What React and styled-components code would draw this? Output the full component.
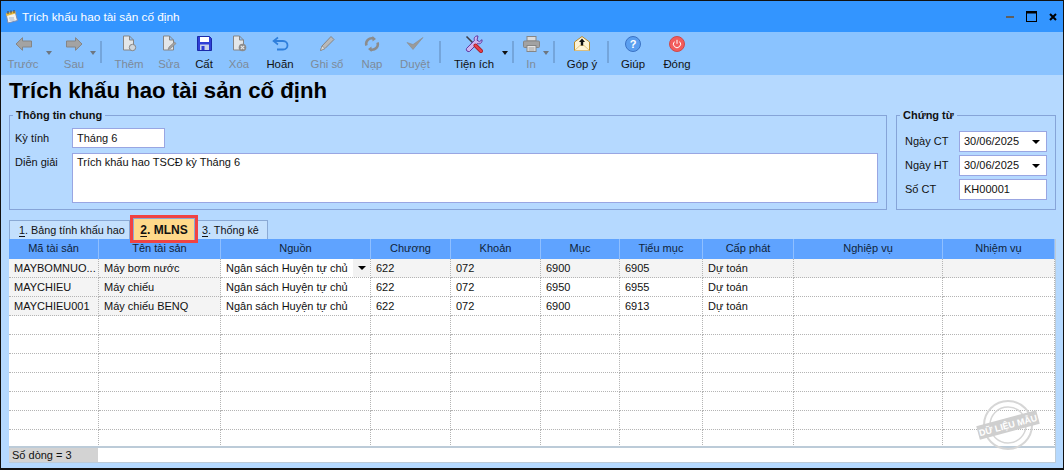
import React from "react";
import styled, { createGlobalStyle } from "styled-components";

const GlobalStyle = createGlobalStyle`
  html, body {
    margin: 0;
    padding: 0;
    background: #fff;
  }
  * {
    box-sizing: border-box;
  }
`;

const Window = styled.div`
  position: relative;
  display: flex;
  flex-direction: column;
  width: 1064px;
  height: 470px;
  border: 1px solid #111;
  border-bottom-width: 2px;
  background: #b5d9ff;
  font-family: "Liberation Sans", Arial, sans-serif;
  font-size: 11px;
  color: #111;
  overflow: hidden;
`;

const TitleBar = styled.div`
  display: flex;
  flex: none;
  align-items: center;
  height: 31px;
  padding: 0 6px 0 3px;
  background: #3395ff;
  color: #fff;
  font-size: 11.8px;
`;

const TitleText = styled.span`
  flex: 1;
  margin-left: 3px;
`;

const WinButtons = styled.div`
  display: flex;
  align-items: center;
  gap: 12px;
`;

const Toolbar = styled.div`
  display: flex;
  flex: none;
  align-items: stretch;
  height: 43px;
  padding-left: 2px;
  background: #8ac3ff;
  font-size: 11.4px;
`;

const ToolButton = styled.div`
  display: flex;
  flex-direction: column;
  align-items: center;
  width: ${(p) => p.$w}px;
  margin-left: ${(p) => p.$ml || 0}px;
  padding-top: 2px;
  color: ${(p) => (p.$off ? "#7d8a99" : "#111")};
  white-space: nowrap;
`;

const ToolIcon = styled.div`
  display: flex;
  align-items: center;
  justify-content: center;
  height: 19px;
`;

const ToolLabel = styled.span`
  margin-top: 4px;
  line-height: 14px;
`;

const Caret = styled.div`
  width: ${(p) => p.$w || 12}px;
  padding-top: 19px;
  display: flex;
  justify-content: center;

  &::before {
    content: "";
    height: 0;
    border-left: 3.5px solid transparent;
    border-right: 3.5px solid transparent;
    border-top: 4px solid ${(p) => (p.$off ? "#6d7680" : "#111")};
  }
`;

const Sep = styled.div`
  width: 2px;
  margin: 9px 0 12px ${(p) => p.$ml || 0}px;
  background: #74a5db;
`;

const Body = styled.div`
  flex: 1;
  min-height: 0;
  display: flex;
  flex-direction: column;
  padding: 0 7px 5px 8px;
`;

const PageTitle = styled.h1`
  flex: none;
  margin: 3px 0 0;
  font-size: 22.2px;
  line-height: 26px;
  font-weight: 700;
  color: #000;
`;

const GroupRow = styled.div`
  display: flex;
  flex: none;
  gap: 9px;
  margin-top: 5px;
  height: 101px;
`;

const Group = styled.fieldset`
  margin: 0;
  padding: 0;
  width: ${(p) => p.$w}px;
  border: 1px solid #86a4d8;
`;

const Legend = styled.legend`
  margin-left: 3px;
  padding: 0 3px;
  font-weight: 700;
  line-height: 12px;
`;

const InfoGrid = styled.div`
  display: grid;
  grid-template-columns: 57px 1fr;
  row-gap: 5px;
  padding: 7px 8px 0 5px;
`;

const DocGrid = styled.div`
  display: grid;
  grid-template-columns: 54px 88px;
  row-gap: 3px;
  padding: 10px 0 0 8px;
`;

const FieldLabel = styled.label`
  line-height: ${(p) => p.$lh || 21}px;
  color: #111;
`;

const Box = styled.div`
  display: flex;
  align-items: ${(p) => (p.$multi ? "flex-start" : "center")};
  justify-content: space-between;
  width: ${(p) => (p.$w ? `${p.$w}px` : "100%")};
  height: ${(p) => p.$h || 21}px;
  padding: ${(p) => (p.$multi ? "1px 0 0 4px" : "0 5px 0 4px")};
  background: #fff;
  border: 1px solid #99a6e2;
  line-height: 15px;
`;

const DownMark = styled.span`
  border-left: 4px solid transparent;
  border-right: 4px solid transparent;
  border-top: 4px solid #000;
  margin-right: 1px;
`;

const TabStrip = styled.div`
  display: flex;
  flex: none;
  align-items: flex-end;
  height: 21px;
  margin-top: 8px;
`;

const Tab = styled.div`
  position: relative;
  display: flex;
  align-items: center;
  height: ${(p) => (p.$active ? 22 : 19)}px;
  width: ${(p) => p.$w}px;
  margin-left: ${(p) => p.$ml || 0}px;
  margin-bottom: ${(p) => (p.$active ? -1 : 0)}px;
  padding-left: ${(p) => p.$pl || 0}px;
  justify-content: ${(p) => (p.$active ? "center" : "flex-start")};
  background: ${(p) => (p.$active ? "#ffd98a" : "#c4e0fd")};
  border: 1px solid #8aa9d4;
  border-bottom: 0;
  white-space: nowrap;
  font-weight: ${(p) => (p.$active ? 700 : 400)};
  font-size: ${(p) => (p.$active ? 12 : 10.8)}px;
  color: #111;
  outline: ${(p) => (p.$active ? "3px solid #f04343" : "none")};
  z-index: ${(p) => (p.$active ? 1 : 0)};

  u {
    text-underline-offset: 2px;
  }
`;

const DataGrid = styled.div`
  flex: 1;
  min-height: 0;
  display: flex;
  flex-direction: column;
  width: 1047px;
  background: #fff;
  border-right: 1px solid #bccbd8;
  border-bottom: 1px solid #bccbd8;
  overflow: hidden;
`;

const columns = "90px 122px 150px 80px 90px 79px 83px 91px 149px 112px";

const HeadRow = styled.div`
  display: grid;
  grid-template-columns: ${columns};
  height: 20px;
  flex: none;
  background: #5fa3ff;
`;

const HeadCell = styled.div`
  text-align: center;
  line-height: 19px;
  color: #10233a;
  border-right: 1px solid #8fbfff;
`;

const Rows = styled.div`
  flex: 1;
  min-height: 0;
  overflow: hidden;
`;

const Row = styled.div`
  display: grid;
  grid-template-columns: ${columns};
  height: 19px;
`;

const Cell = styled.div`
  position: relative;
  padding-left: 5px;
  line-height: 18px;
  white-space: nowrap;
  overflow: hidden;
  background: ${(p) => p.$bg || "#fff"};
  border-right: 1px dotted #b4b4b4;
  border-bottom: 1px dotted #b4b4b4;
`;

const ComboMark = styled.span`
  position: absolute;
  top: 0;
  right: 0;
  display: flex;
  align-items: center;
  justify-content: center;
  width: 17px;
  height: 18px;
  background: #f2f2f2;

  &::before {
    content: "";
    border-left: 4px solid transparent;
    border-right: 4px solid transparent;
    border-top: 4px solid #000;
  }
`;

const Footer = styled.div`
  display: grid;
  grid-template-columns: 89px 1fr;
  flex: none;
  height: 16px;
  border-top: 2px solid #bccbd8;
`;

const FooterLabel = styled.div`
  padding-left: 3px;
  line-height: 14px;
  background: #d3d3d3;
`;

const Stamp = styled.svg`
  position: absolute;
  right: 20px;
  bottom: 7px;
  width: 70px;
  height: 70px;
`;

const gray = "#858585";
const grayFill = "#a3a3a3";

const ArrowIcon = ({ flip }) => (
  <svg width="17" height="14" viewBox="0 0 17 14" style={flip ? { transform: "scaleX(-1)" } : undefined}>
    <path d="M7.500 .7 1 7l6.500 6.300V10H16.500V4H7.500z" fill={grayFill} stroke={gray} />
  </svg>
);

const DocShape = () => (
  <path d="M2.500 1h6l4 4v10h-10z M8.500 1v4h4" fill="#e3e6e8" stroke={gray} />
);

const AddDocIcon = () => (
  <svg width="16" height="17" viewBox="0 0 16 17">
    <DocShape />
    <circle cx="11.500" cy="12.500" r="3.200" fill="#cfd6dc" stroke={gray} />
  </svg>
);

const EditDocIcon = () => (
  <svg width="16" height="17" viewBox="0 0 16 17">
    <DocShape />
    <path d="M7 14.500 8 12l5.500-5 1.500 1.500-5.500 5z" fill={grayFill} stroke={gray} strokeWidth="0.7" />
  </svg>
);

const DelDocIcon = () => (
  <svg width="16" height="17" viewBox="0 0 16 17">
    <DocShape />
    <circle cx="11.500" cy="12.500" r="3.800" fill="#8b8b8b" />
    <path d="m9.800 10.800 3.400 3.400m0-3.400-3.400 3.400" stroke="#e6e6e6" strokeWidth="1.200" />
  </svg>
);

const SaveIcon = () => (
  <svg width="15" height="15" viewBox="0 0 15 15">
    <path d="M.5.500h12l2 2v12H.5z" fill="#2f3fd6" stroke="#1a2aa8" />
    <rect x="3" y="1" width="9" height="5" fill="#fff" />
    <rect x="3" y="8.500" width="9" height="5.500" fill="#c9d3ea" />
    <rect x="4.500" y="10" width="3" height="4" fill="#2f3fd6" />
  </svg>
);

const UndoIcon = () => (
  <svg width="17" height="15" viewBox="0 0 17 15">
    <path d="M6 1.500 1.500 5 6 8.500" fill="none" stroke="#2f7fdc" strokeWidth="1.600" />
    <path d="M2 5h9c6 0 6 8.500 0 8.500H5" fill="none" stroke="#2f7fdc" strokeWidth="1.800" />
  </svg>
);

const PencilIcon = () => (
  <svg width="16" height="17" viewBox="0 0 16 17">
    <path d="M1.500 15.500 3 11l9-9.500 3 3L6 13.500z" fill="#b8b8b8" stroke={gray} />
    <path d="M1.500 15.500 3 11l3 2.500z" fill="#dcdcdc" stroke={gray} strokeWidth="0.600" />
  </svg>
);

const ReloadIcon = () => (
  <svg width="16" height="16" viewBox="0 0 16 16">
    <path d="M2.500 9.500C1 5 5 1.500 9.500 2.500M13.500 6.500c1.500 4.500-2.500 8-7 7" fill="none" stroke="#8c8c8c" strokeWidth="2.600" />
    <path d="M8.500 0 12 3l-3.500 2.500zM7.500 16 4 13l3.500-2.500z" fill="#8c8c8c" />
  </svg>
);

const CheckIcon = () => (
  <svg width="18" height="15" viewBox="0 0 18 15">
    <path d="M1 6.500 7 13.500 17 1.500 7 8.500z" fill="#9a9a9a" stroke="#8a8a8a" strokeWidth="0.600" />
  </svg>
);

const ToolsIcon = () => (
  <svg width="18" height="18" viewBox="0 0 18 18">
    <path d="m1.500 1.500 9 9" stroke="#3c3c4a" strokeWidth="1.600" />
    <path d="M13 1c-2.800-.4-4.500 1.800-3.500 4.300L1.500 13.500c-.8 2 1 3.500 3 3l8-8c2.700 1 5-1 4.500-3.800l-2.500 2-2.500-1.500z" fill="#cdb6f0" stroke="#5f35a0" />
    <path d="m10.500 10.500 5.500 5.500" stroke="#a81f2a" strokeWidth="4" strokeLinecap="round" />
    <path d="m10.500 10.500 5.500 5.500" stroke="#e8404a" strokeWidth="2.400" strokeLinecap="round" />
  </svg>
);

const PrinterIcon = () => (
  <svg width="17" height="16" viewBox="0 0 17 16">
    <rect x="4" y="0.500" width="9" height="4.500" fill="#dcdcdc" stroke={gray} />
    <rect x="0.500" y="5" width="16" height="6.500" rx="1" fill="#a2a2a2" stroke={gray} />
    <rect x="4" y="9.500" width="9" height="6" fill="#e6e6e6" stroke={gray} />
    <path d="M5.500 12h6M5.500 14h6" stroke="#9a9a9a" />
  </svg>
);

const MailIcon = () => (
  <svg width="16" height="15" viewBox="0 0 16 15">
    <path d="M.5 6 8 .5 15.500 6v8.500H.5z" fill="#fdf3d4" stroke="#b98a2a" />
    <path d="M.5 14.500 6 9.500h4l5.500 5" fill="#fff4d6" stroke="#d8b45c" strokeWidth="0.700" />
    <path d="M8 2.500 11 6H9.200v3.500H6.800V6H5z" fill="#111" />
  </svg>
);

const HelpIcon = () => (
  <svg width="16" height="16" viewBox="0 0 16 16">
    <circle cx="8" cy="8" r="7.500" fill="#5b9ff0" stroke="#3b72c4" />
    <text x="8" y="12" textAnchor="middle" fontSize="11" fontWeight="700" fill="#fff" fontFamily="Liberation Sans, sans-serif">?</text>
  </svg>
);

const PowerIcon = () => (
  <svg width="16" height="16" viewBox="0 0 16 16">
    <circle cx="8" cy="8" r="7.500" fill="#f25c5c" stroke="#cf4a4a" />
    <path d="M5.400 5.600a3.600 3.600 0 1 0 5.200 0M8 3.800v4" fill="none" stroke="#fff" />
  </svg>
);

const AppIcon = () => (
  <svg width="15" height="15" viewBox="0 0 15 15">
    <path d="M2 4.500 11 2l2.500 9.500L4 14z" fill="#f4f4ee" stroke="#7a8cb5" />
    <path d="M2 4.500 11 2l.6 2.500-9 2.400z" fill="#e8b93a" />
    <path d="M4 2v3M7 1.500v3M10 1v3" stroke="#444" />
    <path d="M5 9h5M5.500 11h5" stroke="#9db0d0" />
  </svg>
);

const tools = [
  { label: "Trước", w: 40, off: true, icon: <ArrowIcon />, caret: 12 },
  { label: "Sau", w: 26, ml: 6, off: true, icon: <ArrowIcon flip />, caret: 12, sep: 1 },
  { label: "Thêm", w: 54, off: true, icon: <AddDocIcon /> },
  { label: "Sửa", w: 26, off: true, icon: <EditDocIcon /> },
  { label: "Cất", w: 44, icon: <SaveIcon /> },
  { label: "Xóa", w: 26, off: true, icon: <DelDocIcon /> },
  { label: "Hoãn", w: 56, icon: <UndoIcon /> },
  { label: "Ghi sổ", w: 38, off: true, icon: <PencilIcon /> },
  { label: "Nạp", w: 52, off: true, icon: <ReloadIcon /> },
  { label: "Duyệt", w: 34, off: true, icon: <CheckIcon />, sep: 7 },
  { label: "Tiện ích", w: 54, ml: 6, icon: <ToolsIcon />, caret: 8, sep: 3 },
  { label: "In", w: 24, ml: 5, off: true, icon: <PrinterIcon />, caret: 6, sep: 4 },
  { label: "Góp ý", w: 50, ml: 2, icon: <MailIcon />, sep: 0 },
  { label: "Giúp", w: 48, icon: <HelpIcon /> },
  { label: "Đóng", w: 40, icon: <PowerIcon /> },
];

const headers = ["Mã tài sản", "Tên tài sản", "Nguồn", "Chương", "Khoản", "Mục", "Tiểu mục", "Cấp phát", "Nghiệp vụ", "Nhiệm vụ"];

const assets = [
  ["MAYBOMNUO...", "Máy bơm nước", "Ngân sách Huyện tự chủ", "622", "072", "6900", "6905", "Dự toán", "", ""],
  ["MAYCHIEU", "Máy chiếu", "Ngân sách Huyện tự chủ", "622", "072", "6950", "6955", "Dự toán", "", ""],
  ["MAYCHIEU001", "Máy chiếu BENQ", "Ngân sách Huyện tự chủ", "622", "072", "6900", "6913", "Dự toán", "", ""],
];

const emptyRows = Array.from({ length: 7 }, () => Array(10).fill(""));

function cellBackground(rowIndex, colIndex) {
  if (colIndex < 2 && rowIndex < 3) return "#f4f4f4";
  if (rowIndex === 0 && colIndex !== 2) return "#f4f4f4";
  return "#fff";
}

function App() {
  return (
    <>
      <GlobalStyle />
      <Window>
        <TitleBar>
          <AppIcon />
          <TitleText>Trích khấu hao tài sản cố định</TitleText>
          <WinButtons>
            <svg width="8" height="12" viewBox="0 0 8 12">
              <rect y="5" width="8" height="2" fill="#5f5f5f" />
            </svg>
            <svg width="11" height="11" viewBox="0 0 11 11">
              <rect x="0.500" y="0.500" width="10" height="10" fill="none" stroke="#000" />
              <rect width="11" height="2.500" fill="#000" />
            </svg>
            <svg width="8" height="8" viewBox="0 0 8 8">
              <path d="m1 1 6 6m0-6-6 6" stroke="#000" strokeWidth="2" />
            </svg>
          </WinButtons>
        </TitleBar>

        <Toolbar>
          {tools.map((t) => (
            <React.Fragment key={t.label}>
              <ToolButton $w={t.w} $ml={t.ml} $off={t.off}>
                <ToolIcon>{t.icon}</ToolIcon>
                <ToolLabel>{t.label}</ToolLabel>
              </ToolButton>
              {t.caret && <Caret $w={t.caret} $off={t.off} />}
              {t.sep !== undefined && <Sep $ml={t.sep} />}
            </React.Fragment>
          ))}
        </Toolbar>

        <Body>
          <PageTitle>Trích khấu hao tài sản cố định</PageTitle>

          <GroupRow>
            <Group $w={878}>
              <Legend>Thông tin chung</Legend>
              <InfoGrid>
                <FieldLabel $lh={20}>Kỳ tính</FieldLabel>
                <Box $w={93} $h={20}>Tháng 6</Box>
                <FieldLabel $lh={18}>Diễn giải</FieldLabel>
                <Box $multi $h={50}>Trích khấu hao TSCĐ kỳ Tháng 6</Box>
              </InfoGrid>
            </Group>
            <Group $w={160}>
              <Legend>Chứng từ</Legend>
              <DocGrid>
                <FieldLabel>Ngày CT</FieldLabel>
                <Box>30/06/2025<DownMark /></Box>
                <FieldLabel>Ngày HT</FieldLabel>
                <Box>30/06/2025<DownMark /></Box>
                <FieldLabel>Số CT</FieldLabel>
                <Box>KH00001</Box>
              </DocGrid>
            </Group>
          </GroupRow>

          <TabStrip>
            <Tab $w={121} $pl={9}><span><u>1</u>. Bảng tính khấu hao</span></Tab>
            <Tab $w={62} $ml={3} $active><span><u>2</u>. MLNS</span></Tab>
            <Tab $w={73} $pl={6}><span><u>3</u>. Thống kê</span></Tab>
          </TabStrip>

          <DataGrid>
            <HeadRow>
              {headers.map((h) => (
                <HeadCell key={h}>{h}</HeadCell>
              ))}
            </HeadRow>
            <Rows>
              {[...assets, ...emptyRows].map((row, r) => (
                <Row key={r}>
                  {row.map((value, c) => (
                    <Cell key={c} $bg={cellBackground(r, c)}>
                      {value}
                      {r === 0 && c === 2 && <ComboMark />}
                    </Cell>
                  ))}
                </Row>
              ))}
            </Rows>
            <Footer>
              <FooterLabel>Số dòng = 3</FooterLabel>
              <div />
            </Footer>
          </DataGrid>
        </Body>

        <Stamp viewBox="0 0 70 70">
          <circle cx="35" cy="34" r="24" fill="none" stroke="#d6d6d6" strokeWidth="2" />
          <circle cx="35" cy="34" r="18" fill="none" stroke="#d6d6d6" strokeWidth="1.500" />
          <g transform="rotate(-15 35 34)">
            <rect x="4" y="27" width="62" height="14" fill="#cfcfcf" />
            <text x="35" y="37.500" textAnchor="middle" fontSize="9" fontWeight="700" fill="#fff" fontFamily="Liberation Sans, sans-serif">DỮ LIỆU MẪU</text>
          </g>
        </Stamp>
      </Window>
    </>
  );
}

export default App;
